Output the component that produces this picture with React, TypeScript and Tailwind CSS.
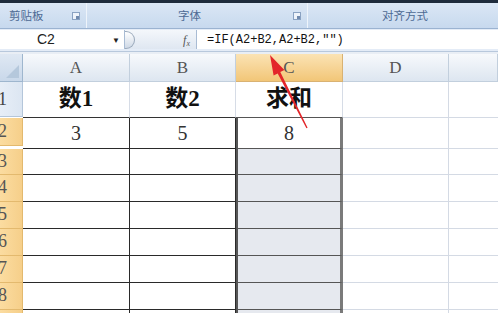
import type { ReactNode } from "react";

// row 1 is the tall title row, then the data rows
const rowHeights = [35, 28, 26, 27, 27, 27, 27, 27, 27];

const serif = { fontFamily: '"Liberation Serif", "Times New Roman", serif' };
const cjk = {
  fontFamily: '"Liberation Serif", "Noto Sans CJK SC", serif',
};

const Launcher = () => (
  <div className="w-[8px] h-[8px] border border-[#8aa2c2] bg-[#eef3fa] flex items-end justify-end">
    <div className="w-[3px] h-[3px] bg-[#7089ad]" />
  </div>
);

const Ribbon = () => (
  <div className="h-[29px] flex flex-col">
    <div className="h-[3px] bg-[#1f2c3c]" />
    <div
      className="flex-1 flex bg-gradient-to-b from-[#dbe7f5] to-[#c7d9ee] border-b border-[#9bb3d1] text-[11.5px] text-[#4d6a94]"
      style={{ fontFamily: '"Noto Sans CJK SC", sans-serif' }}
    >
      <div className="w-[87px] flex items-center justify-between pl-[9px] pr-[6px] border-r border-[#eef4fb]">
        <span>剪贴板</span>
        <Launcher />
      </div>
      <div className="w-[221px] flex items-center pl-[91px] pr-[6px] border-r border-[#eef4fb]">
        <span className="flex-1">字体</span>
        <Launcher />
      </div>
      <div className="flex-1 flex items-center justify-center pl-[4px]">对齐方式</div>
    </div>
  </div>
);

const FormulaBar = () => (
  <div className="h-[23px] flex bg-[#e4ecf7] pt-[1px] pb-[2px] border-b border-[#b8c8dc]">
    <div className="w-[125px] flex items-center bg-white border-r border-[#a9bcd4]">
      <span
        className="flex-1 pl-[37px] text-[14px] text-[#222]"
        style={{ fontFamily: '"Liberation Sans", Arial, sans-serif' }}
      >
        C2
      </span>
      <span className="text-[8px] text-[#222] pr-[4px]">▼</span>
    </div>
    <div className="w-[72px] flex items-center bg-gradient-to-b from-[#f4f7fb] to-[#dfe7f1] border-r border-[#a9bcd4]">
      <div className="w-[10px] h-[18px] rounded-r-full border border-l-0 border-[#9aa9bb] bg-gradient-to-b from-white to-[#cfd9e6]" />
      <span className="flex-1" />
      <span className="text-[12px] italic text-[#555] pr-[6px]" style={serif}>
        f<sub className="text-[8px]">x</sub>
      </span>
    </div>
    <div
      className="flex-1 flex items-center bg-white pl-[10px] text-[12px] text-[#111]"
      style={{ fontFamily: '"Liberation Mono", "Courier New", monospace' }}
    >
      =IF(A2+B2,A2+B2,"")
    </div>
  </div>
);

const Cell = ({ className, children }: { className: string; children?: ReactNode }) => (
  <div className={`flex items-center justify-center ${className}`}>{children}</div>
);

const Sheet = () => {
  const cols = ["A", "B", "C", "D", ""];
  return (
    <div className="grid grid-cols-[23px_107px_106px_107px_106px_1fr]">
      {/* column headers */}
      <div className="h-[28px] bg-gradient-to-b from-[#dfe8f3] to-[#c9d8ea] border-r border-b border-[#9eb6ce] flex items-end justify-end p-[3px]">
        <div className="w-0 h-0 border-l-[13px] border-l-transparent border-b-[13px] border-b-[#b5c8dc]" />
      </div>
      {cols.map((c) => (
        <Cell
          key={c || "E"}
          className={`h-[28px] border-r border-b text-[17px] ${
            c === "C"
              ? "bg-gradient-to-b from-[#fbe3b4] to-[#f2c677] border-[#d9b272] text-[#555]"
              : "bg-gradient-to-b from-[#f7f9fc] to-[#dde6f0] border-[#c2cfdd] text-[#555]"
          }`}
        >
          <span style={serif}>{c}</span>
        </Cell>
      ))}

      {rowHeights.map((h, i) => {
        const r = i + 1;
        const hs = { height: h };
        return (
          <div key={r} className="contents">
            <div
              style={hs}
              className={`flex items-center border-r border-b text-[18px] overflow-hidden ${
                r === 1
                  ? "bg-gradient-to-r from-[#e7eef7] to-[#dce6f2] border-[#b4c6da] text-[#444]"
                  : "bg-gradient-to-r from-[#fbdca0] to-[#f6cf8a] border-[#e3b96e] text-[#555]"
              }`}
            >
              <span className="-ml-[2px]" style={serif}>
                {r}
              </span>
            </div>
            {r === 1 ? (
              <>
                <Cell className="border-r border-b border-r-[#d6dce6] border-b-[#333] text-[23px] font-bold text-[#111]">
                  <span style={cjk}>数1</span>
                </Cell>
                <Cell className="border-r border-b border-r-[#d6dce6] border-b-[#333] text-[23px] font-bold text-[#111]">
                  <span style={cjk}>数2</span>
                </Cell>
                <Cell className="border-r border-b border-r-[#d6dce6] border-b-[#555] text-[23px] font-bold text-[#111]">
                  <span style={cjk}>求和</span>
                </Cell>
              </>
            ) : (
              <>
                <Cell className="border-r border-b border-[#2a2a2a] text-[20px] text-[#333]">
                  <span style={serif}>{r === 2 ? "3" : ""}</span>
                </Cell>
                <Cell className="border-r border-b border-[#2a2a2a] text-[20px] text-[#333]">
                  <span style={serif}>{r === 2 ? "5" : ""}</span>
                </Cell>
                <Cell
                  className={`border-l-2 border-r-[3px] border-b border-l-[#555] border-r-[#7a7a7a] border-b-[#555] text-[20px] text-[#333] ${
                    r === 2 ? "bg-white" : "bg-[#e6e9ef]"
                  }`}
                >
                  <span style={serif}>{r === 2 ? "8" : ""}</span>
                </Cell>
              </>
            )}
            <div className="border-r border-b border-[#d4dae4]" />
            <div className="border-b border-[#d4dae4]" />
          </div>
        );
      })}
    </div>
  );
};

export default function App() {
  return (
    <div className="relative w-[498px] h-[313px] overflow-hidden bg-white">
      <Ribbon />
      <FormulaBar />
      <div className="h-[2px] bg-[#e9eef5]" />
      <Sheet />
      <svg
        className="absolute left-0 top-0 pointer-events-none"
        width="498"
        height="313"
        viewBox="0 0 498 313"
      >
        <polygon
          points="270,55 284.4,70.1 280.3,72.1 307.6,127.7 306.4,128.3 277.7,73.5 273.6,75.5"
          fill="#e3262a"
        />
      </svg>
    </div>
  );
}
